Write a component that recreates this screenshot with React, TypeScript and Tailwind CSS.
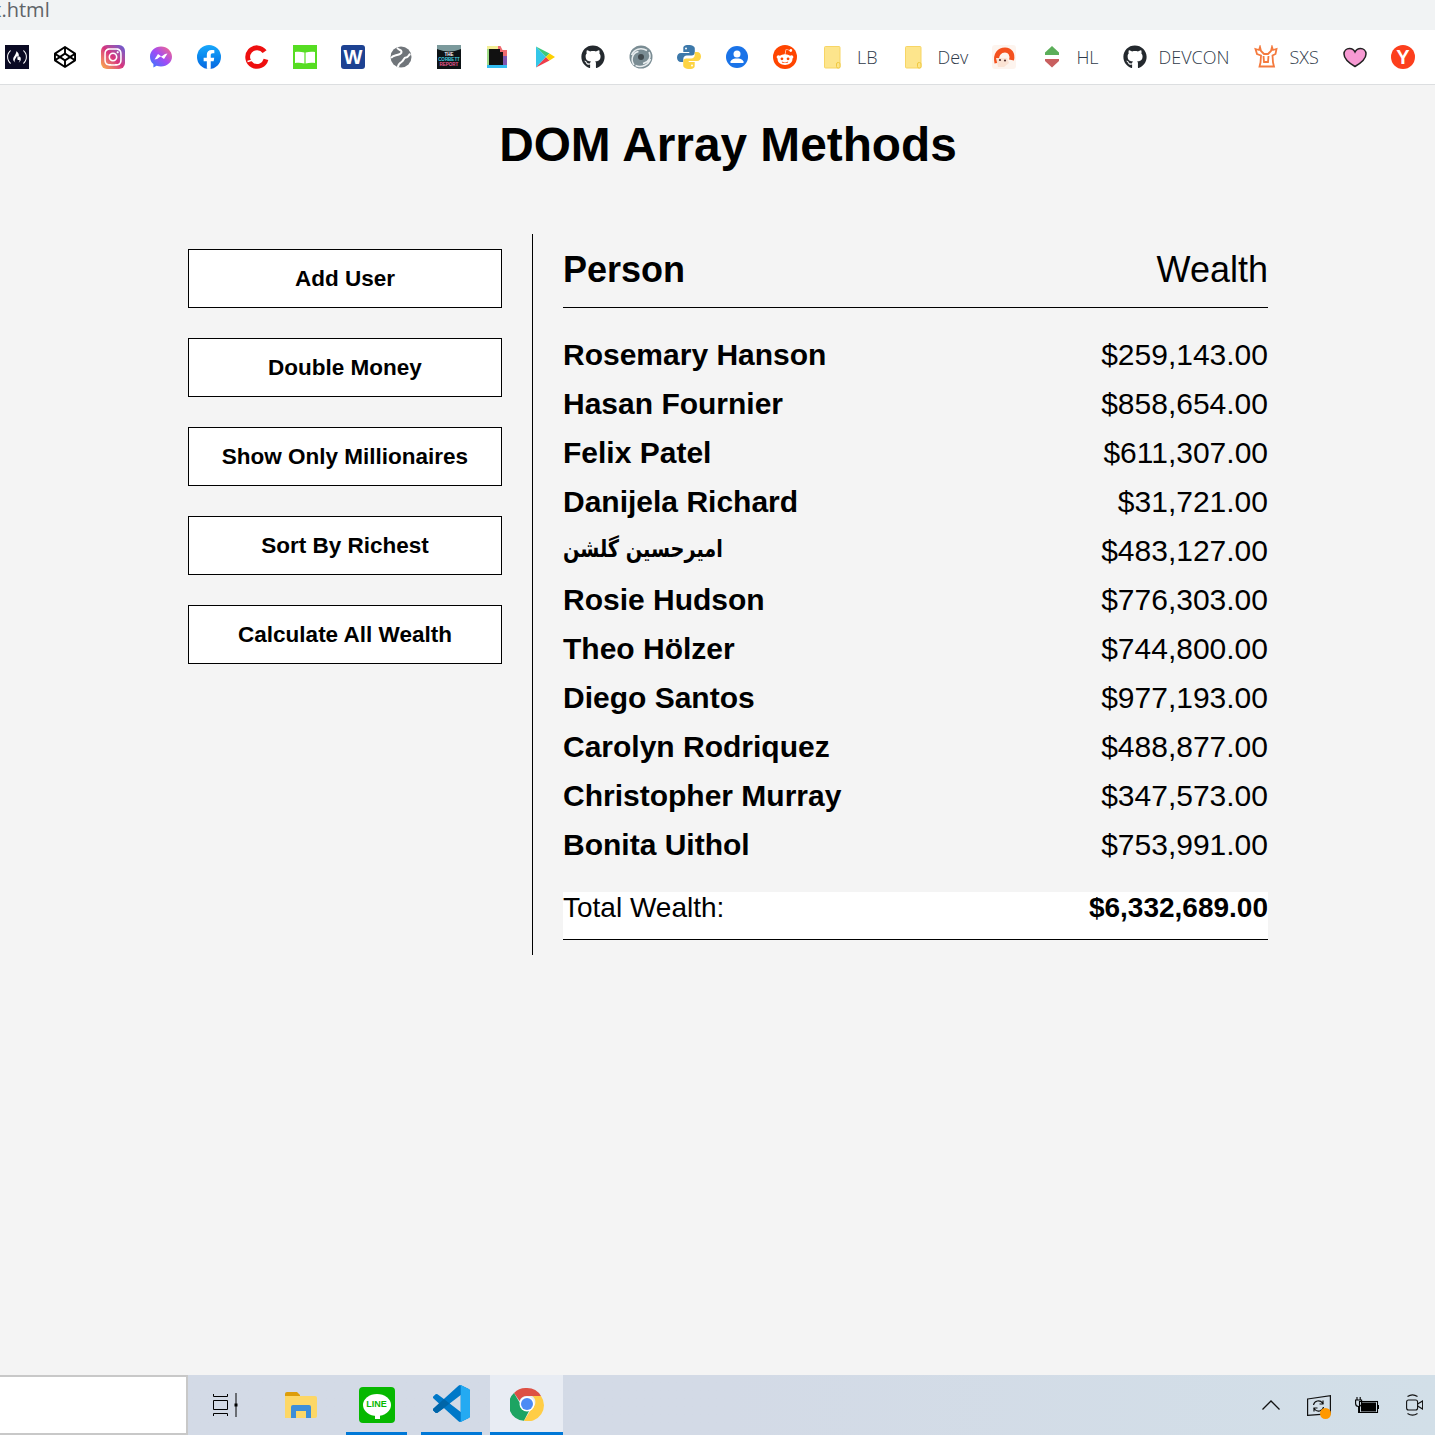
import React from "react";
import { FaFreeCodeCamp, FaCodepen, FaInstagram, FaGithub, FaRedditAlien, FaFacebookF } from "react-icons/fa";

const Box = ({ children }: { children: React.ReactNode }) => (
  <span className="flex h-6 w-6 shrink-0 items-center justify-center">{children}</span>
);

const Folder = () => (
  <svg width="24" height="24" viewBox="0 0 24 24">
    <path d="M4.500 1.500h13.500a1 1 0 0 1 1 1v19.500a1 1 0 0 1-1 1H4.500a1 1 0 0 1-1-1V2.500a1 1 0 0 1 1-1z" fill="#fde58c" stroke="#f7d565" strokeWidth="1" />
    <rect x="15.500" y="17.500" width="3.500" height="5.500" rx="1.500" fill="#fde58c" stroke="#f0c93f" strokeWidth="1" />
  </svg>
);

const Github = () => <FaGithub size={24} color="#24292e" />;

const icons: React.ReactNode[] = [
  <span className="flex h-6 w-6 items-center justify-center bg-[#0a0a23]"><FaFreeCodeCamp size={20} color="#fff" /></span>,
  <FaCodepen size={22} color="#000" />,
  <span className="flex h-6 w-6 items-center justify-center rounded-md bg-gradient-to-tr from-[#fdb035] via-[#d6307e] to-[#5b56d8]"><FaInstagram size={20} color="#fff" /></span>,
  <svg width="24" height="24" viewBox="0 0 24 24">
    <defs><linearGradient id="ms" x1="0" y1="1" x2="1" y2="0"><stop offset="0" stopColor="#2f7cff" /><stop offset="0.5" stopColor="#a24bf5" /><stop offset="1" stopColor="#ff6c7d" /></linearGradient></defs>
    <path d="M12 1.500C5.800 1.500 1 6 1 11.700c0 3 1.300 5.600 3.400 7.400v3.400l3.200-1.700c1.400.4 2.900.6 4.400.6 6.200 0 11-4.400 11-9.700S18.200 1.500 12 1.500z" fill="url(#ms)" />
    <path d="M5.500 14.500l3.500-5.500 3.500 2.600 3.500-2.600 2.500-.5-3.500 5.500-3.500-2.600-3.500 2.600z" fill="#fff" />
  </svg>,
  <span className="relative flex h-6 w-6 items-end justify-center overflow-hidden rounded-full bg-gradient-to-t from-[#0a66e0] to-[#19a8fb]"><FaFacebookF size={20} color="#fff" className="translate-y-[1px]" /></span>,
  <svg width="24" height="24" viewBox="0 0 24 24" fill="none">
    <path d="M19.600 6.700A9.300 9.300 0 1 0 21 14.400" stroke="#ee0f0f" strokeWidth="4.800" />
    <path d="M2.500 16.500l5.500-1.500" stroke="#fff" strokeWidth="1.300" />
  </svg>,
  <span className="flex h-6 w-6 items-center justify-center bg-[#56dd22]">
    <svg width="24" height="24" viewBox="0 0 24 24"><path d="M2 7c3-.5 6-.5 9.400.6V18.500C8 17.500 5 17.500 2 18zM12.600 7.600C16 6.500 19 6.500 22 7v11c-3-.5-6-.5-9.400.5z" fill="#fff" /></svg>
  </span>,
  <span className="flex h-6 w-6 items-center justify-center rounded-[3px] bg-[#1d4292] font-['Liberation_Sans',sans-serif] text-[20px] font-bold text-white">W</span>,
  <svg width="24" height="24" viewBox="0 0 24 24">
    <circle cx="12" cy="12" r="10.500" fill="#70757a" />
    <path d="M8 2.500c1 2.500 4 2 4.500 4s-2.500 3-4.500 3.500-4.500.5-6 3M21.500 9c-2.500 1-2 3.500-4.500 3.500s-2 3-4.500 4.500-3.500 2.500-3.500 5" stroke="#fff" strokeWidth="2" fill="none" />
  </svg>,
  <svg width="24" height="24" viewBox="0 0 24 24">
    <rect width="24" height="24" fill="#0d1316" />
    <ellipse cx="12" cy="0" rx="15" ry="6.500" fill="#7b9a9c" />
    <text x="12" y="11" textAnchor="middle" fontFamily="Liberation Sans" fontSize="4.500" fontWeight="700" fill="#fff">THE</text>
    <text x="12" y="16" textAnchor="middle" fontFamily="Liberation Sans" fontSize="4.500" fontWeight="700" fill="#46d2e2">CORBETT</text>
    <text x="12" y="21" textAnchor="middle" fontFamily="Liberation Sans" fontSize="4.500" fontWeight="700" fill="#ea5a92">REPORT</text>
  </svg>,
  <svg width="24" height="24" viewBox="0 0 24 24">
    <path d="M2 1h13v20H2z" fill="#9fdc86" />
    <path d="M2 1h11v3H2z" fill="#f3ee95" />
    <path d="M13 1h2.500l2 4H22v6h-7V4h-2z" fill="#ee6b70" />
    <path d="M18 11h4v12h-4z" fill="#7d56b0" />
    <path d="M2 20h20v3H2z" fill="#33bdf2" />
    <path d="M4 4h11v3h3v13H4z" fill="#111" />
  </svg>,
  <svg width="24" height="24" viewBox="0 0 24 24">
    <path d="M3 1.500v21L13 12z" fill="#33c6e8" />
    <path d="M3 1.500L13 12l3.500-3.500z" fill="#3ec979" />
    <path d="M3 22.500L13 12l3.500 3.500z" fill="#ee3d4a" />
    <path d="M16.500 8.500L13 12l3.500 3.500L22 12z" fill="#fdd000" />
  </svg>,
  <Github />,
  <svg width="24" height="24" viewBox="0 0 24 24" fill="none">
    <circle cx="12" cy="12" r="11.500" fill="#7a8c93" />
    <path d="M2.500 10C5 4 12 2 18 5.500M5 20C1.500 15 3 8 9.500 6.500M21.500 14c-2 6-9 9-15 6.500M20 7c2.500 5 0 10-6 11.500" stroke="#e8edef" strokeWidth="1.500" />
    <circle cx="12" cy="12" r="3" fill="#41494d" />
  </svg>,
  <svg width="24" height="24" viewBox="0 0 24 24">
    <path d="M11.800 0c-5.500 0-5.500 2-5.500 3.500V7h6v1H4C1.500 8 0 10 0 12.500S1.500 17 4 17h2.300v-3c0-2 1.500-3.500 3.500-3.500h5c1.500 0 3-1.300 3-3V3.500c0-2-2.800-3.500-6-3.500z" fill="#3c78aa" />
    <path d="M12.200 24c5.500 0 5.500-2 5.500-3.500V17h-6v-1H20c2.500 0 4-2 4-4.500S22.500 7 20 7h-2.300v3c0 2-1.500 3.500-3.500 3.500h-5c-1.500 0-3 1.300-3 3v4c0 2 2.800 3.500 6 3.500z" fill="#fdd444" />
    <circle cx="9" cy="3.500" r="1" fill="#fff" />
    <circle cx="15" cy="20.500" r="1" fill="#fff" />
  </svg>,
  <span className="flex h-[22px] w-[22px] items-center justify-center overflow-hidden rounded-full bg-[#1a73e8]">
    <svg width="22" height="22" viewBox="0 0 22 22"><circle cx="11" cy="8" r="3.500" fill="#fff" /><path d="M4.500 15.500c1-2.500 4-3 6.500-3s5.500.5 6.500 3V17h-13z" fill="#fff" /></svg>
  </span>,
  <span className="flex h-6 w-6 items-center justify-center rounded-full bg-[#ff4500]"><FaRedditAlien size={18} color="#fff" /></span>,
];

const Item = ({ icon, label }: { icon: React.ReactNode; label?: string }) => (
  <div className="flex items-center px-3">
    <Box>{icon}</Box>
    {label && <span className="ml-3 font-['Open_Sans',sans-serif] text-[18px] font-light leading-6 text-[#2f3a4a]">{label}</span>}
  </div>
);

const people: [string, string][] = [
  ["Rosemary Hanson", "$259,143.00"],
  ["Hasan Fournier", "$858,654.00"],
  ["Felix Patel", "$611,307.00"],
  ["Danijela Richard", "$31,721.00"],
  ["امیرحسین گلشن", "$483,127.00"],
  ["Rosie Hudson", "$776,303.00"],
  ["Theo Hölzer", "$744,800.00"],
  ["Diego Santos", "$977,193.00"],
  ["Carolyn Rodriquez", "$488,877.00"],
  ["Christopher Murray", "$347,573.00"],
  ["Bonita Uithol", "$753,991.00"],
];

const buttons = ["Add User", "Double Money", "Show Only Millionaires", "Sort By Richest", "Calculate All Wealth"];

export default function App() {
  return (
    <div className="flex h-[1435px] w-[1435px] flex-col overflow-hidden bg-[#f4f4f4] font-['Liberation_Sans',Arial,sans-serif] text-black">
      <div className="h-[30px] shrink-0 overflow-hidden bg-[#f1f3f4]">
        <div className="ml-[-9px] mt-[-3px] font-['Open_Sans',sans-serif] text-[20px] leading-[26px] text-[#5f6368]">x.html</div>
      </div>
      <div className="flex h-[55px] shrink-0 items-center border-b border-[#dcdee0] bg-white">
        <div className="ml-[-7px] flex items-center">
          {icons.map((ic, i) => <Item key={i} icon={ic} />)}
          <Item icon={<Folder />} label="LB" />
          <Item icon={<Folder />} label="Dev" />
          <Item icon={
            <span className="flex h-6 w-6 items-center justify-center rounded-[3px] bg-[#fdf4ee]">
              <svg width="24" height="24" viewBox="0 0 24 24" fill="none">
                <path d="M5 18C3 9 8 5 13 5s8 4 6.500 10" stroke="#f4511e" strokeWidth="5" />
                <path d="M4 13h11l2 5-5 4H6z" fill="#fbe3d4" />
                <circle cx="8" cy="15" r="1.100" fill="#533" />
                <circle cx="13" cy="15.500" r="1.100" fill="#533" />
              </svg>
            </span>
          } />
          <Item icon={
            <svg width="24" height="24" viewBox="0 0 24 24"><path d="M12 1l7 6.500V10H5V7.500z" fill="#5bae59" /><path d="M5 14h14v2l-7 6.500L5 16z" fill="#c85f5f" /></svg>
          } label="HL" />
          <Item icon={<Github />} label="DEVCON" />
          <Item icon={
            <svg width="24" height="24" viewBox="0 0 24 24" fill="none" stroke="#f47a3e" strokeWidth="1.800">
              <path d="M1.500 4l3.500 1 1-3 1 4 3 3h4l3-3 1-4 1 3 3.500-1-1 5-3 1.500.5 7 1 4H5.500l1-4 .5-7L3 9z" />
              <path d="M9.500 11l.5 6h4l.5-6" />
            </svg>
          } label="SXS" />
          <Item icon={
            <svg width="24" height="24" viewBox="0 0 24 24"><path d="M12 21.500C6 18 1 13.500 1 9 1 5.500 3.500 3.500 6.500 3.500 9 3.500 11 5 12 7c1-2 3-3.500 5.500-3.500 3 0 5.500 2 5.500 5.500 0 4.500-5 9-11 12.500z" fill="#f79ad3" stroke="#222" strokeWidth="1.500" /></svg>
          } />
          <Item icon={
            <span className="flex h-6 w-6 items-center justify-center rounded-full bg-[#fc3f1d] font-['Liberation_Sans',sans-serif] text-[20px] font-bold text-white">Y</span>
          } />
        </div>
      </div>

      <div className="w-[1456px] flex-1">
        <h1 className="mt-[32px] text-center text-[47.8px] font-bold leading-[55px]">DOM Array Methods</h1>
        <div className="mx-auto mt-[62px] flex w-[1080px]">
          <aside className="flex w-[344px] shrink-0 flex-col gap-[30px] pt-[15px]">
            {buttons.map((b) => (
              <button key={b} className="h-[59px] w-[314px] border border-black bg-white text-[22.500px] font-bold">{b}</button>
            ))}
          </aside>
          <main className="flex-1 border-l border-black pb-[15px] pl-[30px] pt-[15px]">
            <div className="flex h-[59px] items-start justify-between border-b border-black text-[36px] leading-[41px]">
              <strong>Person</strong>
              <span>Wealth</span>
            </div>
            <div className="mt-[22px]">
              {people.map(([n, w]) => (
                <div key={n} className="flex h-[49px] items-center justify-between text-[30px]">
                  {n.startsWith("ام") ? (
                    <strong className="inline-block origin-center scale-y-125 font-['DejaVu_Sans',sans-serif] text-[19.300px]">{n}</strong>
                  ) : (
                    <strong>{n}</strong>
                  )}
                  <span>{w}</span>
                </div>
              ))}
            </div>
            <div className="mt-[23px] flex h-[48px] items-start justify-between border-b border-black bg-white text-[28px] leading-[32px]">
              <span>Total Wealth:</span>
              <strong>$6,332,689.00</strong>
            </div>
          </main>
        </div>
      </div>

      <div className="flex h-[60px] shrink-0 items-stretch bg-gradient-to-r from-[#d3dae6] via-[#d3dae6] to-[#d2dfe8]">
        <div className="w-[188px] border-y-2 border-r-2 border-[#c8c8c8] bg-white" />
        <div className="flex w-[74px] items-center justify-center">
          <svg width="26" height="24" viewBox="0 0 26 24" fill="none" stroke="#000" strokeWidth="1"><path d="M1.500 1v2.500h14V1M1.500 7.500h14v9h-14zM1.500 23v-2.500h14V23M24 0v24" /><rect x="22.500" y="10.500" width="3" height="3" fill="#000" stroke="none" /></svg>
        </div>
        <div className="flex w-[78px] items-center justify-center">
          <svg width="32" height="26" viewBox="0 0 32 26"><path d="M0 2a2 2 0 0 1 2-2h10l3 3v5H0z" fill="#dd9d0a" /><path d="M0 4h30a2 2 0 0 1 2 2v18a2 2 0 0 1-2 2H0z" fill="#fdd766" /><path d="M6 26V15a2 2 0 0 1 2-2h16a2 2 0 0 1 2 2v11h-5v-7H11v7z" fill="#3e8ed8" /></svg>
        </div>
        <div className="w-[6px]" />
        <div className="flex w-[61px] flex-col items-center justify-end border-b-[3px] border-[#0078d7]">
          <div className="mb-[9px] flex h-9 w-[36px] items-center justify-center rounded-[4px] bg-[#06b800]">
            <div className="relative flex h-[22px] w-[28px] items-center justify-center rounded-[50%] bg-white font-['Liberation_Sans',sans-serif] text-[9px] font-bold text-[#06b800]">LINE
              <span className="absolute -bottom-[3px] left-[12px] h-[6px] w-[5px] bg-white" />
            </div>
          </div>
        </div>
        <div className="w-[14px]" />
        <div className="flex w-[61px] items-center justify-center border-b-[3px] border-[#0078d7]">
          <svg width="37" height="37" viewBox="0 0 100 100">
            <path fillRule="evenodd" d="M70.900 99.300a6.200 6.200 0 0 0 5-.2l20.600-9.900a6.200 6.200 0 0 0 3.500-5.600V16.400a6.200 6.200 0 0 0-3.500-5.600L75.900.9a6.200 6.200 0 0 0-7.100 1.200L29.400 38 12.200 25a4.200 4.200 0 0 0-5.300.2l-5.500 5a4.200 4.200 0 0 0 0 6.200L16.300 50 1.400 63.600a4.200 4.200 0 0 0 0 6.200l5.500 5a4.200 4.200 0 0 0 5.300.2L29.400 62l39.400 35.900a6.200 6.200 0 0 0 2.100 1.400zM75 27.300 45.100 50 75 72.700z" fill="#0078c8" />
            <path d="M75.900.9l20.600 9.900a6.200 6.200 0 0 1 3.500 5.600v67.200a6.200 6.200 0 0 1-3.500 5.600l-20.600 9.900a6.200 6.200 0 0 1-5 .2c2.400 1 4.100-1 4.100-3V3.700c0-2-1.900-3.900-4.100-3.100a6.200 6.200 0 0 1 5 .3z" fill="#24aaf2" />
            <path d="M1.400 63.600a4.200 4.200 0 0 0 0 6.200l5.500 5a4.200 4.200 0 0 0 5.300.2L29.400 62 45.100 50 29.400 38z" fill="#0065a9" />
          </svg>
        </div>
        <div className="w-[8px]" />
        <div className="flex w-[73px] items-center justify-center border-b-[3px] border-[#0078d7] bg-[#e8ecf3]">
          <svg width="34" height="34" viewBox="0 0 34 34">
            <path d="M17 1a16 16 0 0 1 14 8H17a8 8 0 0 0-7.500 5L4 6A16 16 0 0 1 17 1z" fill="#dd5044" />
            <path d="M4 6l7 12a7 7 0 0 0 8 6l-5 9.800A16 16 0 0 1 4 6z" fill="#1da462" />
            <path d="M31 9a16 16 0 0 1-17 24.800L22 21a7 7 0 0 0 0-12z" fill="#ffcd46" />
            <circle cx="17" cy="17" r="7.500" fill="#fff" />
            <circle cx="17" cy="17" r="6" fill="#4c8bf5" />
          </svg>
        </div>
        <div className="flex flex-1 items-center justify-end">
          <svg className="mr-[27px]" width="18" height="10" viewBox="0 0 18 10" fill="none" stroke="#111" strokeWidth="1.300"><path d="M.5 9.500l8.500-8.500 8.500 8.500" /></svg>
          <div className="relative mr-[24px]">
            <svg width="24" height="21" viewBox="0 0 24 21" fill="none" stroke="#111" strokeWidth="1.200"><path d="M.6 4L23.400.7v18L.6 20.400zM6.500 10a5 5 0 0 1 9-2l1 1M16 5.500V9h-3.500M16.500 12a5 5 0 0 1-9 2l-1-1M7 16.500V13h3.500" /></svg>
            <span className="absolute bottom-[-3px] right-0 h-[11px] w-[11px] rounded-full bg-[#ff9800]" />
          </div>
          <svg className="mr-[27px]" width="24" height="16" viewBox="0 0 24 16" fill="none" stroke="#000" strokeWidth="1.100"><path d="M.6 3h6v3.500a3 3 0 0 1-6 0zM2 0v3M5.200 0v3M3.600 10v6" /><rect x="4.500" y="4.500" width="18" height="11" stroke="#000" /><rect x="6" y="5.500" width="15" height="9" fill="#000" stroke="none" /><path d="M23.500 8v4" /></svg>
          <svg className="mr-[12px]" width="17" height="22" viewBox="0 0 17 22" fill="none" stroke="#111" strokeWidth="1.100"><path d="M1.500 2.500c3-2 7-2 10 0M1.500 19.500c3 2 7 2 10 0" /><rect x=".6" y="6" width="11" height="10" rx="2" /><path d="M11.600 10l5-3v8l-5-3" /></svg>
        </div>
      </div>
    </div>
  );
}
